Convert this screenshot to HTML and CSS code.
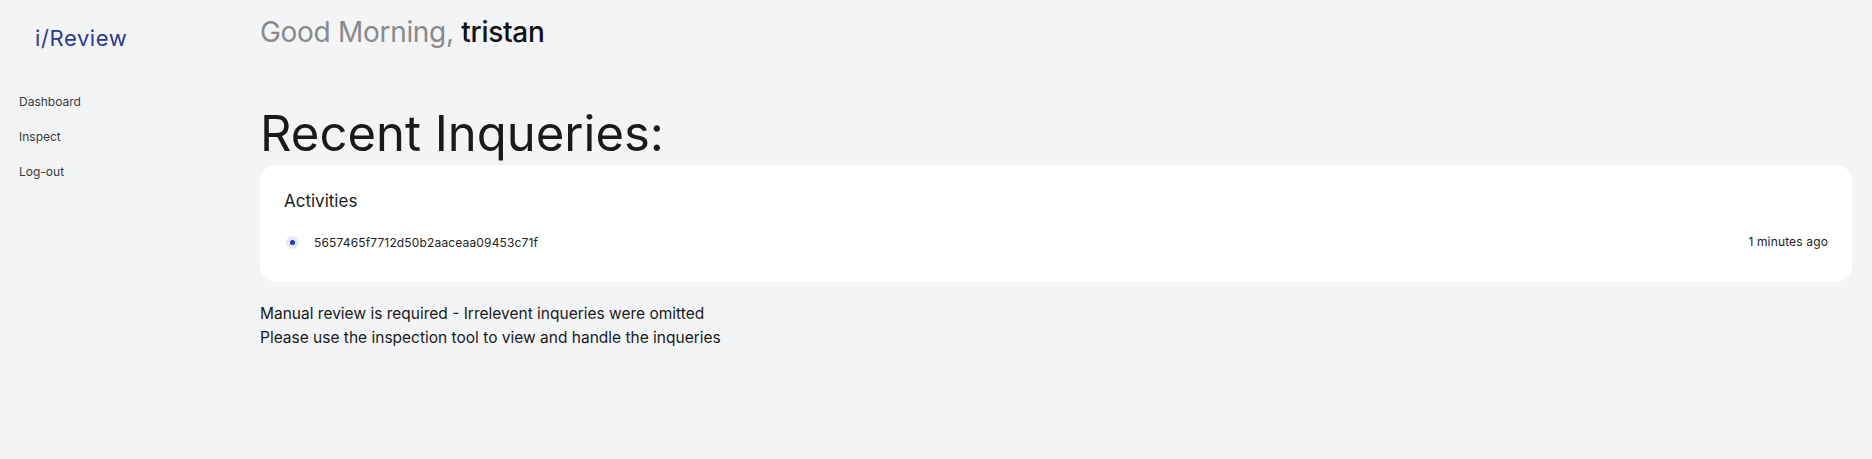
FILE: index.html
```html
<!DOCTYPE html>
<html lang="en">
<head>
<meta charset="utf-8">
<title>i/Review</title>
<link rel="stylesheet" href="styles.css">
</head>
<body>
<div class="app">
  <aside class="sidebar">
    <div class="logo">i/Review</div>
    <nav class="nav">
      <a class="nav-item" href="#">Dashboard</a>
      <a class="nav-item" href="#">Inspect</a>
      <a class="nav-item" href="#">Log-out</a>
    </nav>
  </aside>
  <main class="main">
    <h2 class="greeting"><span class="greeting-muted">Good Morning,</span> <span class="greeting-name">tristan</span></h2>
    <h1 class="title">Recent Inqueries:</h1>
    <section class="card">
      <h3 class="card-title">Activities</h3>
      <ul class="activity-list">
        <li class="activity">
          <span class="dot"></span>
          <span class="activity-id">5657465f7712d50b2aaceaa09453c71f</span>
          <span class="activity-time">1 minutes ago</span>
        </li>
      </ul>
    </section>
    <p class="note">Manual review is required - Irrelevent inqueries were omitted<br>Please use the inspection tool to view and handle the inqueries</p>
  </main>
</div>
</body>
</html>
```
FILE: styles.css
```css
* { box-sizing: border-box; }
html, body {
  margin: 0;
  padding: 0;
  background: #f3f4f6;
  font-family: Inter, "Noto Sans", sans-serif;
  color: #1a1a1a;
}
.app {
  display: flex;
  min-height: 459px;
}
.sidebar {
  width: 260px;
  flex-shrink: 0;
  padding: 24px 0 0 19px;
}
.logo {
  font-size: 22px;
  line-height: 28px;
  letter-spacing: 0.6px;
  color: #2b3a8f;
  padding-left: 16px;
}
.nav {
  display: flex;
  flex-direction: column;
  margin-top: 41px;
  gap: 17px;
}
.nav-item {
  font-size: 12px;
  line-height: 18px;
  color: #3a3a3a;
  text-decoration: none;
}
.main {
  flex: 1;
  padding: 14px 20px 0 0;
}
.greeting {
  margin: 0;
  font-size: 28px;
  line-height: 36px;
  letter-spacing: -0.3px;
  font-weight: 400;
}
.greeting-muted { color: #8a8a8a; }
.greeting-name { color: #111; font-weight: 500; }
.title {
  margin: 58px 0 0;
  font-size: 49px;
  line-height: 52px;
  font-weight: 400;
  color: #1a1a1a;
}
.card {
  margin-top: 5px;
  background: #fff;
  border-radius: 16px;
  padding: 22px 24px 24px;
  height: 117px;
}
.card-title {
  margin: 0;
  font-size: 17px;
  line-height: 28px;
  font-weight: 400;
}
.activity-list {
  list-style: none;
  margin: 17px 0 0;
  padding: 0;
}
.activity {
  display: flex;
  align-items: center;
  height: 20px;
}
.dot {
  width: 13px;
  height: 13px;
  border-radius: 50%;
  background: #e6e9f8;
  display: flex;
  align-items: center;
  justify-content: center;
  margin-left: 2px;
  flex-shrink: 0;
}
.dot::after {
  content: "";
  width: 5px;
  height: 5px;
  border-radius: 50%;
  background: #2338b5;
}
.activity-id {
  margin-left: 15px;
  font-size: 12px;
  letter-spacing: 0.15px;
  color: #222;
}
.activity-time {
  margin-left: auto;
  font-size: 12px;
  letter-spacing: 0.15px;
  color: #222;
  position: relative;
  top: -1px;
}
.note {
  margin: 20px 0 0;
  font-size: 15.5px;
  line-height: 24px;
  color: #1a1a1a;
}
```
